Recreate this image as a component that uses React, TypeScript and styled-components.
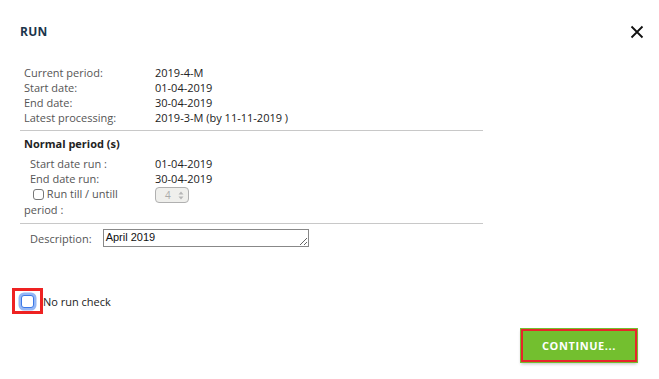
import React from 'react';
import styled, { createGlobalStyle } from 'styled-components';

const GlobalStyle = createGlobalStyle`
    html, body {
        margin: 0;
        padding: 0;
        background: #fff;
    }
    body {
        font-family: 'Open Sans', 'Liberation Sans', sans-serif;
        font-size: 11px;
        color: #222;
    }
`;

interface Row {
    label: string;
    value: string;
}

const current: Row[] = [
    { label: 'Current period:', value: '2019-4-M' },
    { label: 'Start date:', value: '01-04-2019' },
    { label: 'End date:', value: '30-04-2019' },
    { label: 'Latest processing:', value: '2019-3-M (by 11-11-2019 )' },
];

export default function App() {
    return (
        <Dialog>
            <GlobalStyle />
            <Header>
                <Title>RUN</Title>
                <CloseButton aria-label='Close'>
                    <svg width='14' height='14' viewBox='0 0 14 14'>
                        <path d='M1.5 1.5 L12.5 12.5 M12.5 1.5 L1.5 12.5' stroke='#111' strokeWidth='1.8' />
                    </svg>
                </CloseButton>
            </Header>

            <Content>
                <InfoGrid>
                    {current.map(r => (
                        <React.Fragment key={r.label}>
                            <Label>{r.label}</Label>
                            <Value>{r.value}</Value>
                        </React.Fragment>
                    ))}
                </InfoGrid>

                <Divider />

                <Section>
                    <SectionTitle>Normal period (s)</SectionTitle>
                    <RunGrid>
                        <Label indent>Start date run :</Label>
                        <Value>01-04-2019</Value>
                        <Label indent>End date run:</Label>
                        <Value>30-04-2019</Value>
                        <WrapLabel>
                            <SmallCheck /> Run till / untill period :
                        </WrapLabel>
                        <Spinner>
                            <span>4</span>
                            <svg width='6' height='9' viewBox='0 0 6 9'>
                                <path d='M3 0.5 L5.5 3.5 L0.5 3.5 Z M3 8.5 L5.5 5.5 L0.5 5.5 Z' fill='#b5b5b5' />
                            </svg>
                        </Spinner>
                    </RunGrid>
                </Section>

                <Divider />

                <DescRow>
                    <Label>Description:</Label>
                    <DescInput defaultValue='April 2019' />
                </DescRow>
            </Content>

            <CheckRow>
                <FocusFrame>
                    <FocusCheck />
                </FocusFrame>
                <CheckText>No run check</CheckText>
            </CheckRow>

            <Footer>
                <ContinueButton>CONTINUE...</ContinueButton>
            </Footer>
        </Dialog>
    );
}

const Dialog = styled.div`
    width: 659px;
    height: 379px;
    box-sizing: border-box;
    background: #fff;
    display: flex;
    flex-direction: column;
`;

const Header = styled.div`
    display: flex;
    align-items: center;
    justify-content: space-between;
    padding: 24px 15px 0 20px;
    height: 16px;
`;

const Title = styled.h1`
    margin: 0;
    font-size: 12px;
    line-height: 16px;
    font-weight: 700;
    color: #1c354b;
    letter-spacing: 0.3px;
`;

const CloseButton = styled.button`
    border: 0;
    background: none;
    padding: 0;
    width: 14px;
    height: 14px;
    display: flex;
    cursor: pointer;
`;

const Content = styled.div`
    width: 463px;
    margin: 25px 0 0 20px;
`;

const InfoGrid = styled.div`
    display: grid;
    grid-template-columns: 131px 1fr;
    padding-left: 4px;
    line-height: 15px;
`;

const Label = styled.div<{ indent?: boolean }>`
    color: #555;
    padding-left: ${p => (p.indent ? '6px' : '0')};
`;

const Value = styled.div`
    color: #222;
`;

const Divider = styled.hr`
    border: 0;
    border-top: 1px solid #c8c8c8;
    margin: 5px 0 0;
`;

const Section = styled.div`
    padding: 5px 0 0 4px;
`;

const SectionTitle = styled.div`
    font-weight: 700;
    color: #222;
    line-height: 15px;
    margin-bottom: 5px;
`;

const RunGrid = styled.div`
    display: grid;
    grid-template-columns: 131px 1fr;
    line-height: 15px;
`;

const WrapLabel = styled.div`
    color: #555;
    text-indent: 6px;
    line-height: 16px;
    padding-right: 6px;
`;

const SmallCheck = styled.span`
    display: inline-block;
    width: 11px;
    height: 11px;
    border: 1px solid #777;
    border-radius: 3px;
    margin-left: 3px;
    vertical-align: -2px;
    text-indent: 0;
    box-sizing: border-box;
`;

const Spinner = styled.div`
    margin-top: 1px;
    width: 34px;
    height: 16px;
    box-sizing: border-box;
    border: 1px solid #b0b0b0;
    border-radius: 4px;
    background: #efefec;
    color: #aaa;
    display: flex;
    align-items: center;
    justify-content: space-between;
    padding: 0 4px 0 9px;
    font-size: 10px;
`;

const DescRow = styled.div`
    display: flex;
    align-items: center;
    padding: 5px 0 0 10px;
    gap: 11px;
`;

const DescInput = styled.textarea`
    display: block;
    width: 206px;
    height: 18px;
    box-sizing: border-box;
    border: 1px solid #888;
    padding: 1px 2px;
    font-family: 'Liberation Sans', Arial, sans-serif;
    font-size: 11px;
    line-height: 13px;
    color: #111;
    overflow: hidden;
`;

const CheckRow = styled.div`
    display: flex;
    align-items: center;
    margin: 41px 0 0 12px;
`;

const FocusFrame = styled.span`
    display: flex;
    border: 3px solid #ee2222;
    padding: 3px 6px;
    height: 14px;
    align-items: center;
`;

const FocusCheck = styled.span`
    display: block;
    width: 13px;
    height: 13px;
    box-sizing: border-box;
    border: 1.5px solid #3b78e7;
    border-radius: 3px;
    background: #fff;
    box-shadow: 0 0 0 2.5px rgba(92, 144, 240, 0.65);
`;

const CheckText = styled.span`
    color: #222;
    font-size: 11px;
`;

const Footer = styled.div`
    display: flex;
    justify-content: flex-end;
    padding: 15px 22px 0 0;
`;

const ContinueButton = styled.button`
    width: 116px;
    height: 33px;
    background: #73bf2f;
    border: 2px solid #e8252a;
    outline: 1px solid #73bf2f;
    box-shadow: 0 2px 3px rgba(0, 0, 0, 0.25);
    color: #fff;
    font-family: 'Open Sans', sans-serif;
    font-weight: 700;
    font-size: 11px;
    letter-spacing: 0.6px;
    cursor: pointer;
`;
